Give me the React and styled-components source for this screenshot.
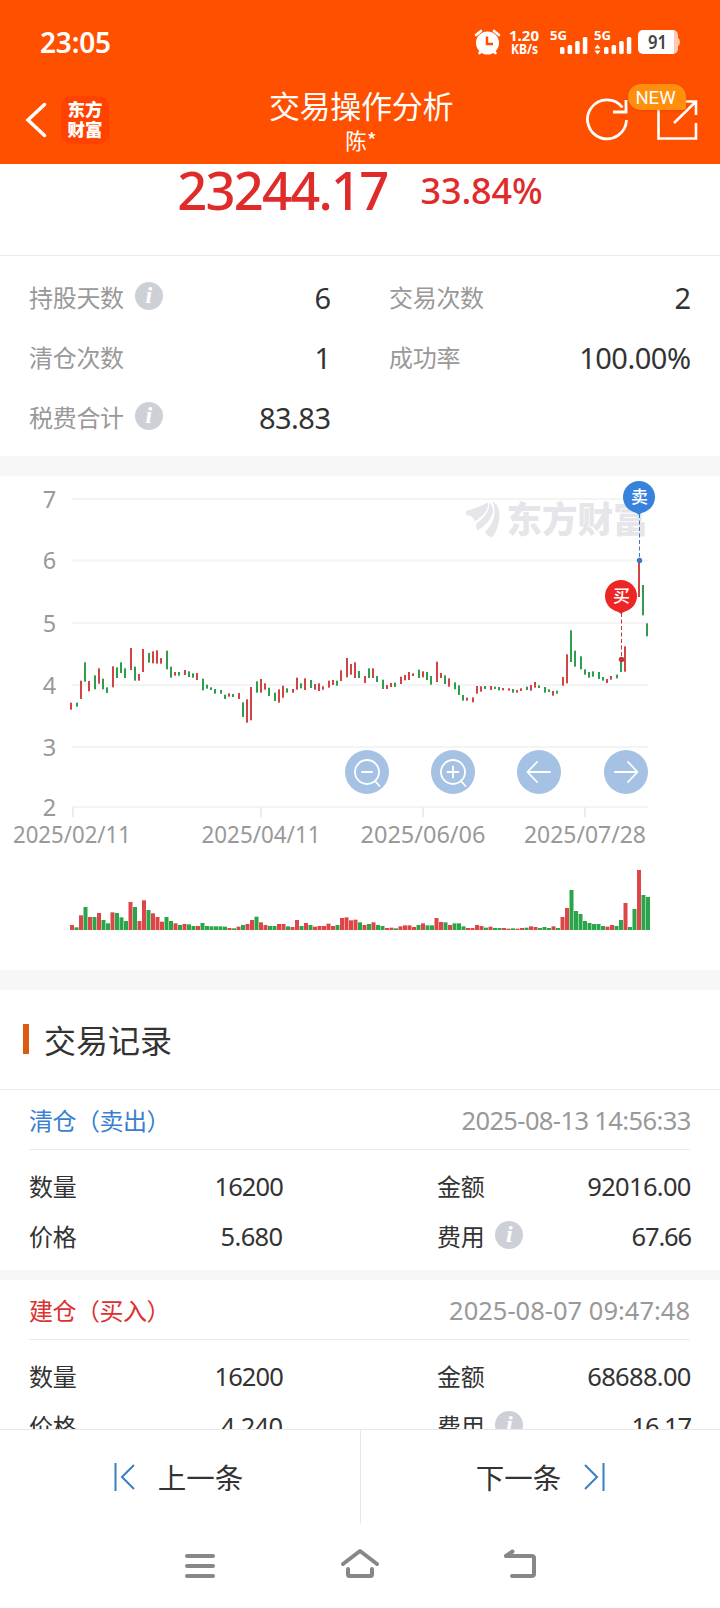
import React from "react"
import styled, {createGlobalStyle} from "styled-components"


const GlobalStyle = createGlobalStyle`
    * {
      box-sizing: border-box;
    }
    body {
      margin: 0;
      background: #fff;
      font-family: "Noto Sans", "Noto Sans CJK SC", sans-serif;
      color: #333;
    }
    svg {
      display: block;
      flex: none;
    }
`
const Screen = styled.div`
    width: 720px;
    height: 1608px;
    display: flex;
    flex-direction: column;
    overflow: hidden;
    background: #fff;
`
const Header = styled.header`
    height: 164px;
    flex: none;
    background: #ff5000;
    color: #fff;
`
const StatusBar = styled.div`
    height: 84px;
    padding: 0 40px;
    display: flex;
    align-items: center;
    justify-content: space-between;
`
const Clock = styled.span`
    font-size: 28px;
    line-height: 32px;
    font-weight: 600;
    letter-spacing: -0.2px;
`
const TitleBar = styled.div`
    height: 80px;
    padding: 0 22px 0 24px;
    display: grid;
    grid-template-columns: 1fr auto 1fr;
`
const TitleLeft = styled.div`
    display: flex;
    align-items: center;
    padding-bottom: 8px;
    gap: 13px;
`
const AppBadge = styled.div`
    width: 48px;
    height: 48px;
    border-radius: 10px;
    background: #ff4200;
    font: 900 17.5px/20px "Noto Sans CJK SC", sans-serif;
    text-align: center;
    padding-top: 3px;
`
const TitleText = styled.div`
    text-align: center;
    font-family: "Noto Sans CJK SC", sans-serif;
`
const Title = styled.h1`
    margin: 2px 0 0;
    font-size: 31px;
    line-height: 38px;
    font-weight: 400;
    letter-spacing: -0.3px;
`
const SubTitle = styled.div`
    font-size: 21.5px;
    line-height: 32px;
`
const TitleRight = styled.div`
    display: flex;
    justify-content: flex-end;
    align-items: flex-start;
    gap: 26px;
    padding-top: 14px;
`
const ShareButton = styled.div`
    position: relative;
`
const NewTag = styled.span`
    position: absolute;
    left: -28px;
    top: -14px;
    width: 58px;
    height: 26px;
    border-radius: 13px 13px 3px 13px;
    background: #ff8f0c;
    font: 400 18.5px/28px Roboto, sans-serif;
    text-align: center;
    padding-right: 3px;
    box-shadow: 0 1px 3px rgba(200, 60, 0, .4);
`

const Scroll = styled.main`
    flex: 1;
    min-height: 0;
    overflow: hidden;
`
const Summary = styled.section`
    height: 92px;
    border-bottom: 1px solid #ebebeb;
    display: flex;
    justify-content: center;
    gap: 33px;
    color: #e02b2b;
    line-height: 54px;
`
const Profit = styled.span`
    font-size: 52.5px;
    font-weight: 500;
    letter-spacing: -1.8px;
    margin-top: -1px;
`
const Rate = styled.span`
    font-size: 36px;
    font-weight: 500;
    letter-spacing: -0.1px;
`
const Metrics = styled.section`
    height: 200px;
    padding: 11px 30px 0 29px;
    display: grid;
    grid-template-columns: 301px 301px;
    grid-auto-rows: 60px;
    column-gap: 59px;
`
const Field = styled.div`
    display: flex;
    align-items: center;
    justify-content: space-between;
`
const Label = styled.span`
    display: flex;
    align-items: center;
    gap: 11px;
    font: 400 24px/36px "Noto Sans CJK SC", sans-serif;
    letter-spacing: -0.3px;
    color: ${({$dark}) => $dark ? "#333" : "#999"};
`
const Value = styled.span`
    font-size: ${({$size}) => $size || 29}px;
    letter-spacing: ${({$track}) => $track ?? -0.5}px;
    margin-right: ${({$track}) => $track ?? -0.5}px;
    color: #333;
`
const InfoDot = styled.i`
    width: 28px;
    height: 28px;
    border-radius: 50%;
    background: #cdd1d7;
    color: #fff;
    font: italic 700 24px/27px "Liberation Serif", serif;
    text-align: center;
    letter-spacing: 0;
    margin-top: -3px;
`
const Band = styled.div`
    height: ${({$h}) => $h}px;
    background: #f7f7f7;
`
const ChartBox = styled.section`
    position: relative;
    height: 494px;
`
const ChartTools = styled.div`
    position: absolute;
    left: 345px;
    top: 274px;
    display: flex;
    gap: 42.2px;
`
const ToolButton = styled.div`
    width: 44px;
    height: 44px;
    border-radius: 50%;
    background: #a5c2e4;
`
const SectionTitle = styled.h2`
    margin: 0;
    height: 100px;
    padding: 0 0 1px 23px;
    border-bottom: 1px solid #ebebeb;
    display: flex;
    align-items: center;
    gap: 15px;
    font: 400 32px/40px "Noto Sans CJK SC", sans-serif;

    &::before {
      content: "";
      width: 6px;
      height: 30px;
      background: #dd5a12;
    }
`
const Record = styled.article`
    padding: 0 30px 0 29px;
    height: 180px;
`
const RecordHead = styled.div`
    height: 60px;
    border-bottom: 1px solid #ebebeb;
    display: flex;
    align-items: center;
    justify-content: space-between;
`
const RecordKind = styled.span`
    font: 400 24px/36px "Noto Sans CJK SC", sans-serif;
    letter-spacing: -0.5px;
    color: ${({$sell}) => $sell ? "#3a7fd0" : "#dd3030"};
`
const RecordTime = styled(Value)`
    color: #999;
`
const RecordGrid = styled.div`
    padding-top: 11px;
    display: grid;
    grid-template-columns: 253px 253px;
    grid-auto-rows: 50px;
    column-gap: 155px;
`
const Pager = styled.nav`
    height: 95px;
    flex: none;
    border-top: 1px solid #e8e8e8;
    display: grid;
    grid-template-columns: 1fr 1fr;
`
const PagerButton = styled.div`
    display: flex;
    align-items: center;
    justify-content: center;
    gap: 23px;
    font: 400 28.5px/40px "Noto Sans CJK SC", sans-serif;
    padding-right: 3px;

    & + & {
      border-left: 1px solid #e8e8e8;
      padding-right: 0;
    }
`
const SystemNav = styled.div`
    height: 84px;
    flex: none;
    padding: 0 180px;
    display: flex;
    align-items: center;
    justify-content: space-between;
`

// [up, high, low, volume], all in thirds of a pixel
const BARS = [
  [1,308,329,15],[0,308,320,8],[1,242,297,44],[0,187,245,69],[1,243,274,39],[0,226,268,39],[1,205,251,51],[0,236,268,30],
  [0,262,279,20],[1,199,262,53],[0,202,234,51],[0,187,219,38],[0,205,234,27],[1,144,210,84],[0,200,242,69],[1,222,242,27],
  [1,147,216,89],[0,159,188,60],[1,154,190,50],[1,151,191,39],[1,174,191,25],[0,152,208,39],[0,200,233,27],[1,216,227,20],
  [0,216,227,15],[1,210,225,18],[0,214,231,17],[0,220,233,12],[1,219,240,12],[0,236,271,21],[0,254,266,12],[0,262,270,11],
  [0,267,281,11],[0,270,281,11],[0,284,297,10],[1,280,290,6],[0,282,291,5],[1,279,297,10],[0,307,351,15],[1,298,368,18],
  [1,261,361,30],[0,244,278,40],[1,237,278,23],[1,250,269,15],[0,263,288,12],[0,278,303,12],[1,268,308,18],[1,257,293,18],
  [0,265,278,11],[1,267,278,9],[1,233,269,30],[0,250,265,12],[1,235,270,21],[0,240,264,15],[1,252,269,10],[1,250,273,12],
  [1,259,269,12],[1,242,263,19],[1,240,255,12],[0,242,257,15],[1,211,243,36],[1,174,232,38],[1,192,224,29],[1,187,234,31],
  [0,213,234,23],[1,228,249,15],[0,205,234,18],[1,205,234,23],[0,228,246,15],[0,239,267,12],[1,255,267,6],[1,249,261,7],
  [0,248,261,5],[1,230,252,11],[1,225,241,14],[1,216,240,14],[1,220,228,9],[0,209,234,15],[1,214,232,20],[0,216,240,14],
  [0,228,254,14],[1,185,246,36],[1,219,234,24],[0,226,252,23],[1,235,260,15],[0,247,268,20],[0,256,285,20],[0,285,302,11],
  [1,293,302,6],[1,292,307,6],[1,258,281,15],[1,259,275,12],[0,258,267,7],[1,258,270,10],[0,260,267,6],[0,261,271,6],
  [1,264,271,6],[1,265,272,4],[0,267,278,5],[1,270,278,4],[1,265,273,6],[0,260,270,7],[1,255,272,11],[1,246,263,9],
  [0,256,264,6],[0,261,278,9],[0,268,276,6],[1,273,287,11],[0,272,281,6],[1,231,257,39],[1,163,250,66],[0,91,186,120],
  [0,152,200,57],[0,169,208,48],[0,208,224,27],[0,216,233,21],[0,214,230,18],[0,216,237,18],[0,231,242,12],[1,237,249,10],
  [1,228,239,15],[0,224,235,12],[0,185,216,30],[1,139,215,81],[0,10,25,9],[0,-30,-12,63],[1,-115,-9,180],[0,-45,46,105],
  [0,70,109,99],
]
const GRID = [[7, 23], [6, 84.5], [5, 147], [4, 209], [3, 271], [2, 331]]
const DATES = [
  {text: "2025/02/11", x: 14, w: 116, tick: 73},
  {text: "2025/04/11", x: 202.5, w: 117, tick: 261},
  {text: "2025/06/06", x: 361.5, w: 123, tick: 423},
  {text: "2025/07/28", x: 525, w: 120, tick: 585},
]
const RED = "#d04446"
const GREEN = "#2f9e4c"

const METRICS = [
  {label: "持股天数", value: "6", info: true},
  {label: "交易次数", value: "2"},
  {label: "清仓次数", value: "1"},
  {label: "成功率", value: "100.00%"},
  {label: "税费合计", value: "83.83", info: true},
]
const RECORDS = [
  {kind: "清仓（卖出）", sell: true, time: "2025-08-13 14:56:33", track: -0.62, count: "16200", amount: "92016.00", price: "5.680", fee: "67.66"},
  {kind: "建仓（买入）", sell: false, time: "2025-08-07 09:47:48", track: 0, count: "16200", amount: "68688.00", price: "4.240", fee: "16.17"},
]


function StatusIcons() {
  const bars = (x) => [7, 9, 13, 17].map((h, i) => (
    <rect key={i} x={x + i * 7.6} y={54 - h} width="4.5" height={h} rx="1.5" />
  ))
  return (
    <svg width="206" height="84" viewBox="474 0 206 84" fill="#fff" fontFamily="Noto Sans" fontWeight="700">
      <circle cx="487.5" cy="43" r="11.5" />
      <path d="M476 35l5-4M499 35l-5-4M479.500 53l3-3M495.500 53l-3-3" stroke="#fff" strokeWidth="2.600" strokeLinecap="round" />
      <path d="M487 36.500v7.500h6" stroke="#ff5000" strokeWidth="2.500" fill="none" />
      <text x="509" y="40.500" fontSize="14.500" textLength="30" lengthAdjust="spacingAndGlyphs">1.20</text>
      <text x="511" y="53.500" fontSize="13.500" textLength="27" lengthAdjust="spacingAndGlyphs">KB/s</text>
      <text x="550" y="39.500" fontSize="13" textLength="17" lengthAdjust="spacingAndGlyphs">5G</text>
      {bars(560)}
      <text x="594" y="39.500" fontSize="13" textLength="17" lengthAdjust="spacingAndGlyphs">5G</text>
      <path d="M594.500 48.500l3-4 3 4zM594.500 50.500l3 4 3-4z" />
      {bars(604)}
      <path d="M672 30h1a5 5 0 0 1 5 5v3q2 1 2 4t-2 4v3a5 5 0 0 1-5 5h-1z" fill="#ffc9b2" />
      <path d="M643 30h31v24h-31a5 5 0 0 1-5-5v-14a5 5 0 0 1 5-5z" />
      <text x="657.500" y="48.500" fontSize="19" fontWeight="600" fill="#444" textAnchor="middle" textLength="19" lengthAdjust="spacingAndGlyphs">91</text>
    </svg>
  )
}

function Pin({x, y, end, color, line, text}) {
  return (
    <g>
      <path d={`M${x + 0.5} ${y + 17}V${end}`} stroke={line} strokeWidth="1" strokeDasharray="4 2.500" />
      <circle cx={x + 0.5} cy={end} r="2.700" fill={line} />
      <path d={`M${x - 12.5} ${y + 10}Q${x - 4} ${y + 14.500} ${x} ${y + 18}Q${x + 4} ${y + 14.500} ${x + 12.500} ${y + 10}z`} fill={color} />
      <circle cx={x} cy={y} r="16" fill={color} />
      <text x={x + 0.5} y={y + 6} fontSize="17" fontWeight="500" fontFamily="Noto Sans CJK SC" fill="#fff" textAnchor="middle">{text}</text>
    </g>
  )
}

function StockChart() {
  return (
    <svg width="720" height="494" viewBox="0 0 720 494" fontFamily="Noto Sans">
      {GRID.map(([price, y]) => (
        <g key={price}>
          <path d={`M72 ${y}H648`} stroke="#f4f4f4" strokeWidth="2" />
          <text x="49.500" y={y + 8.5} fontSize="23.500" fill="#999" textAnchor="middle">{price}</text>
        </g>
      ))}
      {DATES.map(({text, x, w, tick}) => (
        <g key={text}>
          <path d={`M${tick} 331V341`} stroke="#ececec" strokeWidth="2" />
          <text x={x - 1} y="367" fontSize="23.500" fill="#999" textLength={w + 2} lengthAdjust="spacingAndGlyphs">{text}</text>
        </g>
      ))}
      <g fill="#e6e6ea">
        <path d="M466 35Q476 32.500 488 26.500Q489 37 474.500 45.500Q474.500 40 466 39z" />
        <path d="M489.500 26Q494 31 492.500 38Q489 48 477.500 54.500Q475.500 51 476.500 47.500Q490 38 489.500 26z" />
        <path d="M492.500 25Q500 30 499.500 40Q498.500 54 492 61.500Q488 60.500 485 56Q499 42 492.500 25z" />
        <text x="506.500" y="56.500" fontSize="36" fontWeight="900" fontFamily="Noto Sans CJK SC" textLength="142" lengthAdjust="spacingAndGlyphs">东方财富</text>
      </g>
      {BARS.map(([up, high, low, vol], i) => {
        const x = 71 + 2 * Math.ceil(i * 2.25)
        return (
          <g key={i}>
            <rect x={x - 1} y={124 + high / 3} width="2" height={(low - high) / 3} fill={up ? RED : GREEN} />
            <rect x={70 + i * 4.5} y={454 - vol / 3} width="4" height={vol / 3} fill={up ? "#de4548" : "#2ba54a"} />
          </g>
        )
      })}
      <Pin x={639} y={21} end={84.5} color="#3782dc" line="#3f78c2" text="卖" />
      <Pin x={621} y={120} end={183.5} color="#ee2525" line="#c43333" text="买" />
    </svg>
  )
}

function ToolIcon({children}) {
  return (
    <ToolButton>
      <svg width="44" height="44" viewBox="0 0 44 44" fill="none" stroke="#fff" strokeWidth="1.800" strokeLinecap="round" strokeLinejoin="round">
        {children}
      </svg>
    </ToolButton>
  )
}

function Row({label, value, info, dark, size, track}) {
  return (
    <Field>
      <Label $dark={dark}>{label}{info && <InfoDot>i</InfoDot>}</Label>
      <Value $size={size} $track={track}>{value}</Value>
    </Field>
  )
}

export default function App() {
  return (
    <Screen>
      <GlobalStyle />
      <Header>
        <StatusBar>
          <Clock>23:05</Clock>
          <StatusIcons />
        </StatusBar>
        <TitleBar>
          <TitleLeft>
            <svg width="24" height="40" viewBox="0 0 24 40" fill="none" stroke="#fff" strokeWidth="3.500" strokeLinecap="round">
              <path d="M20.500 4.500L4 20L20.500 35.500" />
            </svg>
            <AppBadge>东方<br />财富</AppBadge>
          </TitleLeft>
          <TitleText>
            <Title>交易操作分析</Title>
            <SubTitle>陈*</SubTitle>
          </TitleText>
          <TitleRight>
            <svg width="44" height="44" viewBox="0 0 44 44" fill="none" stroke="#fff" strokeWidth="2.800">
              <path d="M40.500 22A19.500 19.500 0 1 1 36.500 9.500" />
              <path d="M40 2V14H27" />
            </svg>
            <ShareButton>
              <svg width="42" height="44" viewBox="0 0 42 44" fill="none" stroke="#fff" strokeWidth="2.600">
                <path d="M12 3H2.500V40.500H40V25M27 3.500H40V17M40 3.500L18 25" />
              </svg>
              <NewTag>NEW</NewTag>
            </ShareButton>
          </TitleRight>
        </TitleBar>
      </Header>
      <Scroll>
        <Summary>
          <Profit>23244.17</Profit>
          <Rate>33.84%</Rate>
        </Summary>
        <Metrics>
          {METRICS.map(m => <Row key={m.label} {...m} />)}
        </Metrics>
        <Band $h={20} />
        <ChartBox>
          <StockChart />
          <ChartTools>
            <ToolIcon><circle cx="22" cy="22" r="12" /><path d="M17 22h10M30 31l4.500 5" /></ToolIcon>
            <ToolIcon><circle cx="22" cy="22" r="12" /><path d="M16.500 22h11M22 16.500v11M30 31l4.500 5" /></ToolIcon>
            <ToolIcon><path d="M33 22H10.500M20 12L10.500 22L20 32" /></ToolIcon>
            <ToolIcon><path d="M11 22H33.500M24 12L33.500 22L24 32" /></ToolIcon>
          </ChartTools>
        </ChartBox>
        <Band $h={20} />
        <SectionTitle>交易记录</SectionTitle>
        {RECORDS.map((r, i) => (
          <React.Fragment key={r.time}>
            {i > 0 && <Band $h={10} />}
            <Record>
              <RecordHead>
                <RecordKind $sell={r.sell}>{r.kind}</RecordKind>
                <RecordTime $size={25.5} $track={r.track}>{r.time}</RecordTime>
              </RecordHead>
              <RecordGrid>
                <Row label="数量" value={r.count} dark size={25.5} track={-0.9} />
                <Row label="金额" value={r.amount} dark size={25.5} track={-0.7} />
                <Row label="价格" value={r.price} dark size={25.5} track={-0.6} />
                <Row label="费用" value={r.fee} info dark size={25.5} track={-1.1} />
              </RecordGrid>
            </Record>
          </React.Fragment>
        ))}
      </Scroll>
      <Pager>
        <PagerButton>
          <svg width="21" height="30" viewBox="0 0 21 30" fill="none" stroke="#3a7fc4" strokeWidth="2">
            <path d="M1.500 1V29M20 3L8 15L20 27" />
          </svg>
          上一条
        </PagerButton>
        <PagerButton>
          下一条
          <svg width="21" height="30" viewBox="0 0 21 30" fill="none" stroke="#3a7fc4" strokeWidth="2">
            <path d="M19.500 1V29M1 3L13 15L1 27" />
          </svg>
        </PagerButton>
      </Pager>
      <SystemNav>
        <svg width="40" height="40" viewBox="0 0 40 40" fill="none" stroke="#878787" strokeWidth="4" strokeLinecap="round">
          <path d="M7 10H33M7 20H33M7 30H33" />
        </svg>
        <svg width="40" height="40" viewBox="0 0 40 40" fill="none" stroke="#878787" strokeWidth="4" strokeLinecap="round" strokeLinejoin="round">
          <path d="M3 18L20 5L37 18M8 23V28.500Q8 30 9.500 30H30.500Q32 30 32 28.500V23" />
        </svg>
        <svg width="40" height="40" viewBox="0 0 40 40" fill="none" stroke="#878787" strokeWidth="4" strokeLinecap="round" strokeLinejoin="round">
          <path d="M12.500 5.500L6 10H31.500Q34 10 34 12V28Q34 30 31.500 30H12" />
        </svg>
      </SystemNav>
    </Screen>
  )
}
